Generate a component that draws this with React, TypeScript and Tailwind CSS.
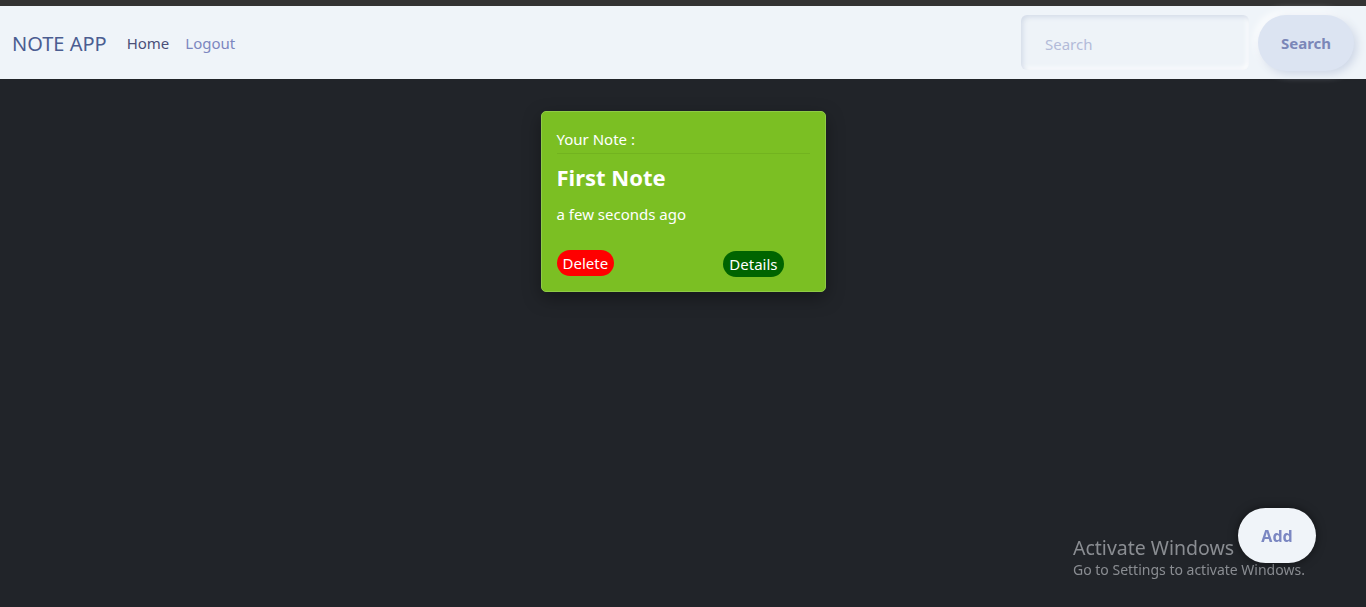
import React from 'react';

const font = { fontFamily: '"Segoe UI", "Noto Sans", "Open Sans", sans-serif' };

export default function App() {
  return (
    <div className="min-h-screen bg-[#212429] flex flex-col" style={font}>
      <div className="h-[6px] bg-[#333333]" />
      {/* Navbar */}
      <nav className="h-[73px] bg-[#eff4f9] flex items-center pl-3 pr-3">
        <span className="text-[20px] text-[#4b5d91] mr-5 pt-[3px]">NOTE APP</span>
        <a className="text-[15px] text-[#4a4f78] mr-4 pt-[2px]">Home</a>
        <a className="text-[15px] text-[#7c87c0] pt-[2px]">Logout</a>
        <div className="ml-auto flex items-center gap-[9px]">
          <input
            placeholder="Search"
            className="w-[228px] h-[55px] rounded-[6px] bg-[#eef3f8] pl-6 pt-[2px] text-[15px] placeholder-[#b3bbd9] outline-none shadow-[inset_2px_2px_5px_#d3dbe8,inset_-2px_-2px_5px_#ffffff]"
          />
          <button className="w-[96px] h-[56px] rounded-full bg-[#dce4f2] pt-[2px] text-[15px] font-bold text-[#7b87b8] shadow-[3px_3px_8px_#cdd6e6,-3px_-3px_8px_#ffffff]">
            Search
          </button>
        </div>
      </nav>

      {/* Notes */}
      <main className="flex justify-center pt-[32px]">
        <div className="w-[285px] h-[181px] rounded-[5px] bg-[#7bbf23] border border-[#8fcb45] shadow-[0_6px_18px_rgba(0,0,0,0.35)] px-[15px] pt-[16px] flex flex-col">
          <div className="text-[15px] text-white pb-[2px] border-b border-[#72b31f]">Your Note :</div>
          <div className="text-[22px] font-bold text-white mt-[8px] leading-[30px]">First Note</div>
          <div className="text-[15px] text-white mt-[11px]">a few seconds ago</div>
          <div className="flex mt-[25px] pr-[26px] justify-between items-start">
            <button className="h-[26px] px-[6px] rounded-full bg-[#ff0000] text-white text-[15px] leading-[26px]">Delete</button>
            <button className="h-[26px] px-[6px] mt-[1px] rounded-full bg-[#006400] text-white text-[15px] leading-[26px]">Details</button>
          </div>
        </div>
      </main>

      {/* Windows watermark */}
      <div className="fixed left-[1073px] top-[536px] text-[#8a8d92] pointer-events-none">
        <div className="text-[19.5px] leading-[24px]">Activate Windows</div>
        <div className="text-[14px] leading-[20px]">Go to Settings to activate Windows.</div>
      </div>

      {/* Add button */}
      <button className="fixed left-[1238px] top-[508px] w-[78px] h-[55px] rounded-full bg-[#f0f4f9] text-[16px] font-bold text-[#7b87c2] shadow-[0_0_10px_rgba(0,0,0,0.5)]">
        Add
      </button>
    </div>
  );
}
